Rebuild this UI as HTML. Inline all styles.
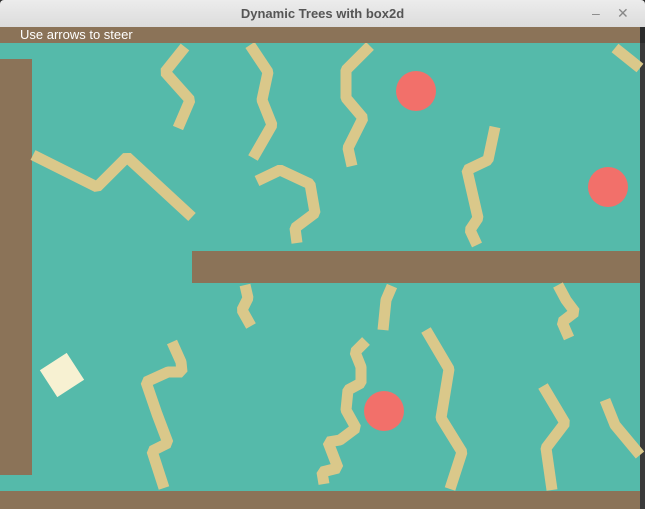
<!DOCTYPE html>
<html><head><style>
body{margin:0;width:645px;height:509px;overflow:hidden;background:#2b2b2b;font-family:"Liberation Sans",sans-serif}
.title{position:absolute;left:0;top:0;width:645px;height:27px;background:linear-gradient(#ececec,#dcdcdc);border-radius:4px 4px 0 0;text-align:center;font:bold 13px/27px "Liberation Sans",sans-serif;color:#555}
.btn{position:absolute;top:0;font:14px/27px "Liberation Sans",sans-serif;color:#888}
.bar{position:absolute;left:0;top:27px;width:640px;height:16px;background:#8b7358;color:#fff;font-size:13px;line-height:16px;padding-left:20px;box-sizing:border-box}
</style></head><body>
<div class="title">Dynamic Trees with box2d</div>
<div class="btn" style="left:592px">–</div><div class="btn" style="left:617px">✕</div>
<svg style="position:absolute;left:0;top:43px" width="645" height="466" viewBox="0 43 645 466">
<rect x="0" y="43" width="640" height="466" fill="#55baaa"/>
<rect x="640" y="43" width="5" height="466" fill="#3a3a3a"/>
<rect x="0" y="59" width="32" height="416" fill="#8b7358"/>
<rect x="0" y="491" width="640" height="18" fill="#8b7358"/>
<rect x="192" y="251" width="448" height="32" fill="#8b7358"/>
<g fill="none" stroke="#dac88a" stroke-width="11" stroke-linejoin="bevel">
<polyline points="185,47 165,72 190,100 178,128"/>
<polyline points="250,45 268,72 262,100 272,125 253,158"/>
<polyline points="370,46 346,70 346,98 363,118 348,148 352,166"/>
<polyline points="257,181 280,170 310,184 315,213 295,228 297,243"/>
<polyline points="33,155 97,187 127,157 192,217"/>
<polyline points="495,127 488,160 467,170 478,218 470,230 477,245"/>
<polyline points="615,48 640,68"/>
<polyline points="245,285 248,298 242,310 251,326"/>
<polyline points="392,286 386,300 383,330"/>
<polyline points="558,285 566,300 575,312 562,322 569,338"/>
<polyline points="172,342 181,362 182,372 168,372 146,382 157,414 168,443 152,451 164,488"/>
<polyline points="366,341 355,352 361,367 361,383 348,390 346,410 356,428 340,440 328,442 338,468 322,472 324,484"/>
<polyline points="426,330 449,369 441,418 462,452 450,489"/>
<polyline points="543,386 565,423 546,448 552,490"/>
<polyline points="605,400 615,425 640,455"/>
</g>
<circle cx="416" cy="91" r="20" fill="#f2706a"/>
<circle cx="608" cy="187" r="20" fill="#f2706a"/>
<circle cx="384" cy="411" r="20" fill="#f2706a"/>
<rect x="46" y="359" width="32" height="32" fill="#f7f1d2" transform="rotate(-33 62 375)"/>
</svg>
<div class="bar">Use arrows to steer</div>
</body></html>
